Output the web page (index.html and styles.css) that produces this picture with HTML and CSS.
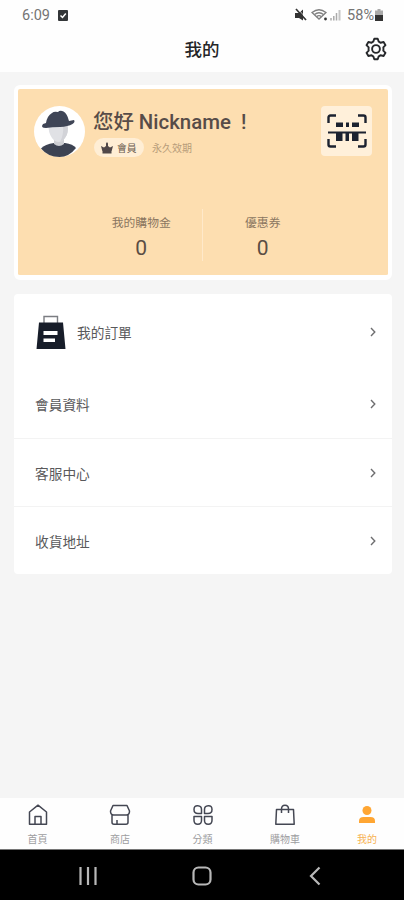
FILE: index.html
```html
<!DOCTYPE html>
<html lang="zh-Hant">
<head>
<meta charset="utf-8">
<meta name="viewport" content="width=device-width, initial-scale=1">
<title>我的</title>
<link rel="stylesheet" href="styles.css">
</head>
<body>
<div class="status">
  <span class="time">6:09</span>
  <svg class="check" width="10" height="11" viewBox="0 0 10 11"><rect width="10" height="11" rx="1" fill="#333638"/><path d="M2.500 5.500l2 2 3.300-4" fill="none" stroke="#fff" stroke-width="1.500"/></svg>
  <svg class="signals" width="48" height="14" viewBox="0 0 48 14">
    <path d="M0 5h4l4-3.500v11L4 10H0z" fill="#333"/><path d="M1 1l10 11" stroke="#333" stroke-width="1.700"/><path d="M2.500.5l9.500 10.500" stroke="#fff" stroke-width=".7"/>
    <g fill="none" stroke="#808080" stroke-width="1.300"><path d="M17 4.500q7-5.500 14 0L24 11z"/><path d="M19.500 6.500q4.500-3.500 9 0M21.500 8.700q2.500-2 5 0"/></g>
    <circle cx="30.500" cy="11" r="1.400" fill="#333"/>
    <path d="M36 12.500v-2.500M38.800 12.500v-4.500M41.500 12.500V5" stroke="#aaa" stroke-width="1.500"/><path d="M44.500 12.500V2" stroke="#c5c5c5" stroke-width="2"/>
  </svg>
  <span class="percent">58%</span>
  <svg width="8" height="12" viewBox="0 0 8 12"><path d="M2.500 0h3v1.500H8V12H0V1.500h2.500z" fill="#aaa"/><path d="M0 6h8v6H0z" fill="#333"/></svg>
</div>
<header class="header">
  <h1>我的</h1>
  <svg class="gear" width="24" height="24" viewBox="0 0 24 24" fill="none" stroke="#26282b" stroke-width="1.900" stroke-linejoin="round"><path d="M9.300 4.600 10.300 1.700h3.400l1 2.900q1 .4 1.800 1.100l3.100-.7 1.900 3.200-2.200 2.200q.3 1.600 0 3.200l2.200 2.200-1.900 3.200-3.100-.7q-.8.700-1.800 1.100l-1 2.900h-3.400l-1-2.900q-1-.4-1.800-1.100l-3.100.7-1.900-3.200 2.200-2.200q-.3-1.600 0-3.200L2.500 8.200 4.400 5l3.100.7q.8-.7 1.800-1.100z"/><circle cx="12" cy="12" r="3.900"/></svg>
</header>
<main>
  <section class="member">
    <div class="profile">
      <svg class="avatar" width="51" height="51" viewBox="0 0 51 51">
        <circle cx="25.500" cy="25.500" r="25.500" fill="#fff"/>
        <path d="M7 42.500Q11 38 20 37h11q8 1 11 5Q35 51 25.500 51 14 51 7 42.500z" fill="#3c4252"/>
        <path d="M20 31h10v7q-5 4-10 0z" fill="#cdced3"/>
        <path d="M14.500 19h19q1.500 8-2.500 13-3 4-6.500 4T18 32q-4-6-3.500-13z" fill="#e0e1e5"/>
        <path d="M29 19h4.500q1.500 8-2.500 13-2 3-5 4 4-7 3-17z" fill="#d2d3d8"/>
        <path d="M9 18q-3 4 3 4 6-1 14-1 8-.5 12.500-3 3-2 1.500-4l-5 1Q33 7 29.500 5.500 26 4 24 6q-4-1-6 1-5 3-6 10z" fill="#3f4556"/>
      </svg>
      <div class="identity">
        <div class="greeting">您好 <span>Nickname</span> <span class="mark">!</span></div>
        <div class="level">
          <span class="badge"><svg width="12" height="12" viewBox="0 0 12 12" fill="#514849"><path d="M0 4l3 1.500L5 4V1.500L6 0l1 1.500V4l2 1.500L12 4l-1.300 5H1.300zM1.500 9h9v2.500h-9z"/></svg>會員</span>
          <span class="expiry">永久效期</span>
        </div>
      </div>
      <div class="scan">
        <svg width="42" height="36" viewBox="0 0 42 36">
          <path d="M2.500 10V4.500q0-2 2-2h5.500M32 2.500h5.500q2 0 2 2V10M2.500 26v5.500q0 2 2 2h5.500M32 33.500h5.500q2 0 2-2V26" fill="none" stroke="#1c2230" stroke-width="2.400"/>
          <path d="M10 9.500h7V14h-7zM20 9.500h3V14h-3zM26 9.500h7V14h-7zM2 18.500h38v2H2zM10 20.500h6.500V28H10zM19.500 20.500H23V28h-3.500zM26 20.500h6.500V28H26z" fill="#1c2230"/>
        </svg>
      </div>
    </div>
    <div class="stats">
      <div class="stat"><span>我的購物金</span><b>0</b></div>
      <div class="stat"><span>優惠券</span><b>0</b></div>
    </div>
  </section>
  <nav class="menu">
    <a class="row orders"><svg class="bag" width="30" height="35" viewBox="0 0 30 35"><path d="M8 8V1.500h13.500V8" fill="none" stroke="#7b7d82" stroke-width="1.400"/><path d="M3 7.500h24L29.500 34H.5z" fill="#171d29"/><path d="M7.500 16h14v4h-14zM7.500 23.500H19v3.500H7.500z" fill="#fff"/></svg><span>我的訂單</span><svg class="arrow" viewBox="0 0 6 10"><path d="M1 1l3.800 4L1 9"/></svg></a>
    <a class="row"><span>會員資料</span><svg class="arrow" viewBox="0 0 6 10"><path d="M1 1l3.800 4L1 9"/></svg></a>
    <a class="row"><span>客服中心</span><svg class="arrow" viewBox="0 0 6 10"><path d="M1 1l3.800 4L1 9"/></svg></a>
    <a class="row"><span>收貨地址</span><svg class="arrow" viewBox="0 0 6 10"><path d="M1 1l3.800 4L1 9"/></svg></a>
  </nav>
</main>
<nav class="tabs">
  <a><svg viewBox="0 0 22 22"><path d="M2.500 8 11 1.200 19.500 8v12.300h-17zM8 20V12.500h6V20"/></svg>首頁</a>
  <a><svg viewBox="0 0 22 22"><path d="M4 1.500h14L20.500 7q0 4-3.200 4H4.700Q1.500 11 1.500 7zM3 11v7.300q0 2 2 2h12q2 0 2-2V11M8 20v-4"/></svg>商店</a>
  <a><svg viewBox="0 0 22 22"><path d="M9.500 9.500H6Q2 9.500 2 5.500T5.800 1.800 9.500 5.500zM12.500 9.500H16q4 0 4-4t-3.800-3.700-3.700 3.700zM9.500 12.500H2v3.700Q2 20.200 5.800 20.200t3.700-4zM12.500 12.500H20v3.700q0 4-3.800 4t-3.700-4z"/></svg>分類</a>
  <a><svg viewBox="0 0 22 22"><path d="M2.500 5.500h17l.7 14.700H1.800zM7.500 9V5q0-3.800 3.500-3.800T14.500 5v4"/></svg>購物車</a>
  <a class="active"><svg viewBox="0 0 22 22"><circle cx="11" cy="6.500" r="4.500"/><path d="M3 19v-2q0-4 4.500-4h7q4.500 0 4.500 4v2z"/></svg>我的</a>
</nav>
<footer class="system">
  <svg width="20" height="20" viewBox="0 0 20 20"><path d="M2.500 1v18M10 1v18M17.500 1v18"/></svg>
  <svg width="20" height="20" viewBox="0 0 20 20"><rect x="1.500" y="1.500" width="17" height="17" rx="5"/></svg>
  <svg width="20" height="20" viewBox="0 0 20 20"><path d="M14.500 1.500 6 10l8.500 8.500"/></svg>
</footer>
</body>
</html>
```
FILE: styles.css
```css
* { box-sizing: border-box; }
body {
  margin: 0;
  height: 900px;
  overflow: hidden;
  display: flex;
  flex-direction: column;
  background: #f5f5f5;
  color: #59595b;
  font-family: Roboto, "Noto Sans CJK TC", sans-serif;
}
svg { display: block; flex: none; }
.status {
  display: flex;
  align-items: center;
  height: 30px;
  padding: 0 21px 0 22px;
  background: #fefefe;
  color: #747474;
  font-size: 14.5px;
}
.check { margin-left: 8px; }
.signals { margin-left: auto; }
.percent { margin: 0 1px 0 4px; font-size: 14.5px; }
.header {
  display: grid;
  grid-template-columns: 1fr auto 1fr;
  align-items: center;
  height: 42px;
  padding: 0 16px 4px;
  background: #fefefe;
}
.header h1 {
  grid-column: 2;
  margin: 0;
  padding-top: 2px;
  color: #242527;
  font-size: 17.5px;
  line-height: 24px;
  font-weight: 500;
}
.gear { justify-self: end; }
main { flex: 1; padding: 13px 12px 0 14px; }
.member {
  height: 195px;
  border: solid #fff;
  border-width: 4px 4px 5px;
  border-radius: 6px;
  background: #fddeb0;
  padding: 17px 16px 0;
}
.profile { display: flex; height: 51px; }
.identity { margin-left: 9px; }
.greeting {
  height: 30px;
  margin-left: -1px;
  padding-top: 1px;
  color: #574c48;
  font-size: 20.4px;
  line-height: 30px;
  font-weight: 500;
  white-space: nowrap;
}
.mark { margin-left: 5px; }
.level { display: flex; align-items: center; margin-top: 2px; }
.badge {
  display: flex;
  align-items: center;
  gap: 4px;
  width: 50px;
  height: 19px;
  padding-left: 7px;
  border-radius: 10px;
  background: #ffeed5;
  color: #6b5c50;
  font-size: 9.8px;
  white-space: nowrap;
}
.expiry { margin-left: 8px; color: #b79c7a; font-size: 10px; }
.scan {
  display: grid;
  place-items: center;
  width: 51px;
  height: 50px;
  margin-left: auto;
  border-radius: 4px;
  background: #fff0da;
}
.stats { display: flex; margin: 52px 49px 0 47px; }
.stat {
  display: flex;
  flex: 1;
  flex-direction: column;
  align-items: center;
  height: 52px;
  padding-top: 4px;
}
.stat + .stat { border-left: 1px solid #ffe9ca; }
.stat span { color: #8b7660; font-size: 11.8px; line-height: 20px; }
.stat b { color: #5a4d44; font-size: 21px; line-height: 31px; font-weight: 400; }
.menu {
  height: 280px;
  margin-top: 14px;
  border-radius: 4px;
  background: #fff;
}
.row {
  display: flex;
  align-items: center;
  height: 68px;
  padding: 0 16px 0 21px;
  font-size: 13.7px;
}
.row + .row + .row { border-top: 1px solid #f3f3f3; }
.orders { height: 76px; }
.bag { margin: 0 11px 0 1px; }
.arrow { width: 6px; height: 10px; margin-left: auto; fill: none; stroke: #6e6e70; stroke-width: 1.4; }
.tabs {
  display: grid;
  grid-template-columns: 75px 90px 75px 90px 74px;
  height: 52px;
  background: #fefefe;
  border-bottom: 1px solid #777;
}
.tabs a {
  display: flex;
  flex-direction: column;
  align-items: center;
  gap: 5px;
  padding-top: 6px;
  color: #9d9da0;
  font-size: 10px;
  line-height: 18px;
}
.tabs svg { width: 22px; height: 22px; fill: none; stroke: #444753; stroke-width: 1.5; stroke-linejoin: round; }
.tabs .active { color: #f7b253; }
.tabs .active svg { fill: #ffa633; stroke: none; }
.system {
  display: flex;
  align-items: center;
  justify-content: space-between;
  height: 50px;
  padding: 2px 79px 0 78px;
  background: #000;
}
.system svg { fill: none; stroke: #b8b8b8; stroke-width: 2.2; }
```
